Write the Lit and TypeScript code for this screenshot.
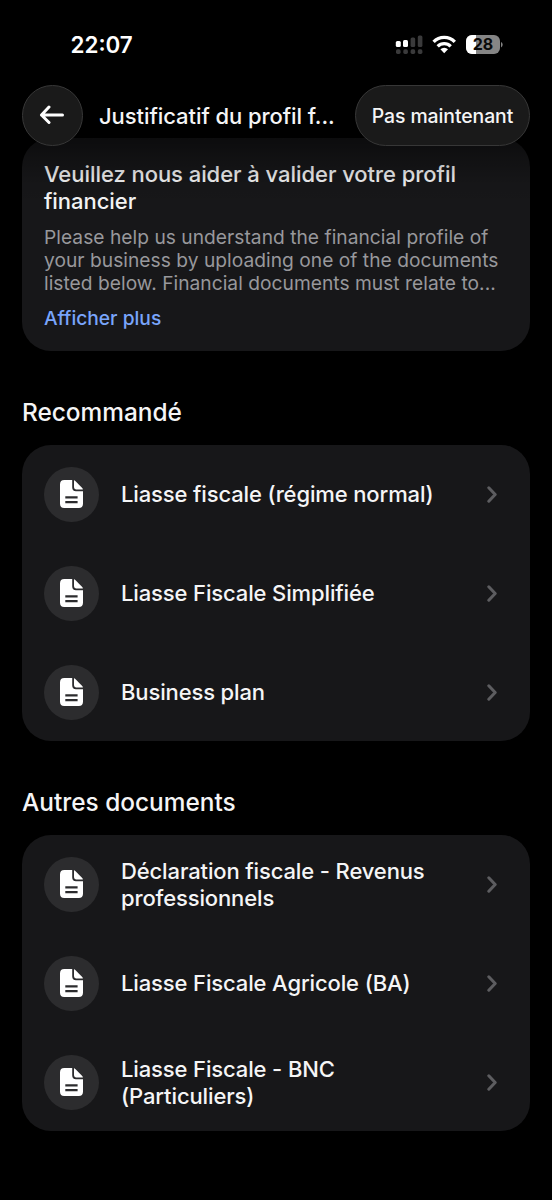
import { LitElement, html, css } from "lit";
import { customElement, property } from "lit/decorators.js";

@customElement("status-bar")
class StatusBar extends LitElement {
  static styles = css`
    :host { display: flex; justify-content: space-between; align-items: center; height: 28px; padding: 0 49px 0 70.5px; }
    .time { font-size: 22.4px; font-weight: 600; line-height: 28px; color: #fff; }
    .indicators { display: flex; align-items: center; }
    svg { display: block; }
    .level { font: 700 16px Inter, sans-serif; }
  `;
  render() {
    return html`
      <span class="time">22:07</span>
      <div class="indicators">
        <svg width="108" height="20" viewBox="0 0 108 20">
          <g fill="#fff">
            <rect x="0.8" y="6" width="5" height="6" rx="1.5" />
            <rect x="8" y="5" width="5" height="7" rx="1.5" />
          </g>
          <g fill="#3a3a3b">
            <rect x="15.6" y="2.5" width="4.6" height="9.5" rx="1.5" />
            <rect x="22.8" y="0.5" width="4.6" height="11.5" rx="1.5" />
            <rect x="1" y="14.3" width="4.6" height="4.6" rx="1.6" />
            <rect x="8.3" y="14.3" width="4.6" height="4.6" rx="1.6" />
            <rect x="15.6" y="14.3" width="4.6" height="4.6" rx="1.6" />
            <rect x="22.8" y="14.3" width="4.6" height="4.6" rx="1.6" />
          </g>
          <g fill="none" stroke="#fff" stroke-width="3.3">
            <path d="M38.6 6.9a14.6 14.6 0 0 1 21.2 0" />
            <path d="M42.7 11.4a9.2 9.2 0 0 1 13 0" />
          </g>
          <path d="M45.4 14.3a5.5 5.5 0 0 1 7.6 0L49.2 18.2z" fill="#fff" />
          <defs><clipPath id="cell"><rect x="71" y="0" width="34" height="19" rx="6" /></clipPath></defs>
          <g clip-path="url(#cell)">
            <rect x="71" y="0" width="34" height="19" fill="#858585" />
            <rect x="71" y="0" width="10" height="19" fill="#fff" />
          </g>
          <path d="M106 7a3 3 0 0 1 0 5.4z" fill="#858585" />
          <text class="level" x="88" y="15.4" text-anchor="middle" fill="#0a0a0a">28</text>
        </svg>
      </div>
    `;
  }
}

@customElement("document-row")
class DocumentRow extends LitElement {
  @property() label = "";
  static styles = css`
    :host { display: flex; align-items: center; height: 99px; padding: 0 33px 0 22px; }
    .badge { box-sizing: border-box; display: flex; align-items: center; justify-content: center; width: 55px; height: 55px; padding-bottom: 1px; border-radius: 50%; background: #2c2c2e; flex: none; }
    .label { flex: 1; margin: 0 36px 0 22px; font-size: 22px; line-height: 26.5px; font-weight: 500; letter-spacing: -0.13px; color: #f5f5f6; white-space: pre-line; }
    svg { display: block; flex: none; }
  `;
  render() {
    return html`
      <span class="badge">
        <svg width="23" height="28" viewBox="0 0 23 28">
          <path d="M4.3 0H12.2V7.2Q12.2 11.2 16 11.2H23V23.8Q23 28 18.8 28H4.2Q0 28 0 23.8V4.3Q0 0 4.3 0z" fill="#fff" />
          <path d="M14 .2Q14.7.4 15.3 1L22 7.7Q22.8 8.5 22.9 9.4H16Q14 9.4 14 7.3z" fill="#fff" />
          <path d="M5.3 17.3H17.6M5.3 22.1H17.6" stroke="#2c2c2e" stroke-width="2.2" />
        </svg>
      </span>
      <span class="label">${this.label}</span>
      <svg width="10" height="17" viewBox="0 0 10 17">
        <path d="M1.8 1.8 8.2 8.5 1.8 15.2" fill="none" stroke="#5d5d60" stroke-width="3" stroke-linecap="round" stroke-linejoin="round" />
      </svg>
    `;
  }
}

@customElement("app-root")
class AppRoot extends LitElement {
  static styles = css`
    :host { display: block; position: relative; height: 1200px; overflow: hidden; background: #000; color: #f5f5f6; font-family: Inter, sans-serif; }
    .top { position: absolute; inset: 0 0 auto 0; height: 210px; padding-top: 31px; box-sizing: border-box; background: linear-gradient(#000 0 137px, rgba(0,0,0,.48) 138px, rgba(0,0,0,.25) 160px, rgba(0,0,0,.06) 183px, transparent 207px); }
    .bar { display: flex; align-items: center; margin-top: 26px; padding: 0 22px; height: 60.5px; }
    .back, .later { box-sizing: border-box; height: 60.5px; border: 1px solid #373737; background: #1a1a1a; display: flex; align-items: center; justify-content: center; flex: none; }
    .back { width: 60.5px; border-radius: 50%; }
    .back svg { margin-bottom: 1px; }
    .later { width: 175px; padding-top: 1px; border-radius: 31px; font-size: 19.4px; font-weight: 500; letter-spacing: -0.08px; white-space: nowrap; }
    .title { flex: 1; padding: 1.5px 0 0 16.5px; font-size: 22px; font-weight: 500; letter-spacing: -0.07px; white-space: nowrap; }
    .page { padding: 138px 22px 0; }
    .card { background: #171719; border-radius: 29px; overflow: hidden; }
    .intro { box-sizing: border-box; height: 213px; padding: 23px 22px; }
    .heading { font-size: 22px; line-height: 26.5px; font-weight: 500; letter-spacing: -0.05px; white-space: pre-line; }
    .text { margin-top: 12px; font-size: 19.2px; line-height: 23.2px; letter-spacing: 0.025px; color: #98989c; white-space: pre; }
    .more { margin-top: 10px; font-size: 19.2px; line-height: 24px; font-weight: 500; color: #79a5fb; }
    .section { height: 94px; padding-top: 46px; box-sizing: border-box; line-height: 31px; font-size: 24.4px; font-weight: 500; }
    .list { height: 296px; }
  `;
  private recommended = ["Liasse fiscale (régime normal)", "Liasse Fiscale Simplifiée", "Business plan"];
  private others = [
    "Déclaration fiscale - Revenus\nprofessionnels",
    "Liasse Fiscale Agricole (BA)",
    "Liasse Fiscale - BNC\n(Particuliers)",
  ];
  private list(items: string[]) {
    return html`<div class="card list">${items.map((i) => html`<document-row .label=${i}></document-row>`)}</div>`;
  }
  render() {
    return html`
      <div class="page">
        <div class="card intro">
          <div class="heading">${"Veuillez nous aider à valider votre profil\nfinancier"}</div>
          <div class="text">${"Please help us understand the financial profile of\nyour business by uploading one of the documents\nlisted below. Financial documents must relate to..."}</div>
          <div class="more">Afficher plus</div>
        </div>
        <div class="section">Recommandé</div>
        ${this.list(this.recommended)}
        <div class="section">Autres documents</div>
        ${this.list(this.others)}
      </div>
      <div class="top">
        <status-bar></status-bar>
        <div class="bar">
          <div class="back">
            <svg width="26" height="20" viewBox="0 0 26 20" fill="none" stroke="#fff" stroke-width="3" stroke-linecap="round" stroke-linejoin="round">
              <path d="M23.5 10H2.5M10 2 2.5 10 10 17.5" />
            </svg>
          </div>
          <div class="title">Justificatif du profil f...</div>
          <div class="later">Pas maintenant</div>
        </div>
      </div>
    `;
  }
}
